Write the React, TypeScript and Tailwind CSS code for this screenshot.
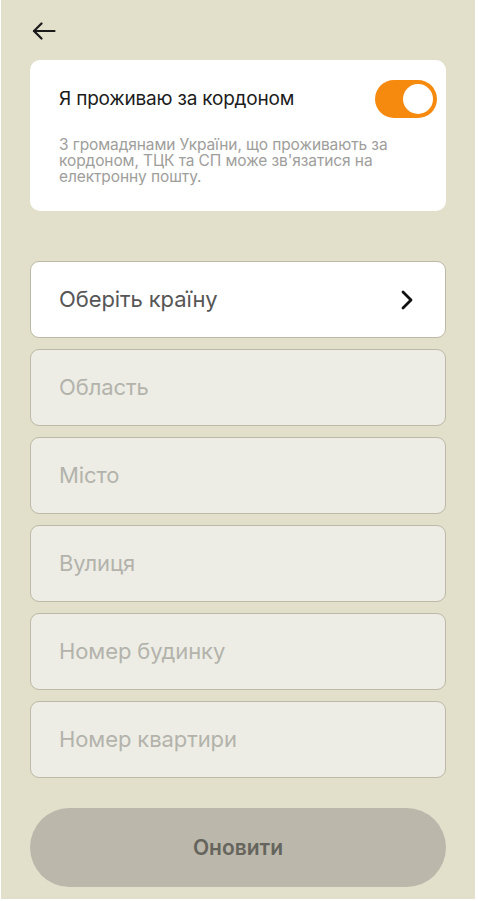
import React from "react";

const fields = ["Область", "Місто", "Вулиця", "Номер будинку", "Номер квартири"];

export default function App() {
  return (
    <div className="w-[478px] h-[901px] bg-white pl-[1px] pr-[3px] pb-[2px]" style={{ fontFamily: "Inter, 'Noto Sans', sans-serif" }}>
      <div className="h-full bg-[#e2dfcb] px-[29px] flex flex-col">
        <div className="h-[60px] flex items-center pl-[2px] pt-[2px]">
          <svg width="24" height="18" viewBox="0 0 24 18" fill="none" stroke="#1a1a1a" strokeWidth="2.2" strokeLinecap="round" strokeLinejoin="round">
            <path d="M22.5 9H2" />
            <path d="M9.5 1.5L2 9l7.5 7.5" />
          </svg>
        </div>
        <div className="bg-white rounded-[10px] h-[151px] pl-[29px] pr-[9px] pt-[20px]">
          <div className="flex items-center justify-between">
            <span className="text-[19px] leading-[24px] text-[#1c1c1c] tracking-[-0.2px]">Я проживаю за кордоном</span>
            <div className="w-[62px] h-[38px] rounded-full bg-[#f68a0f] flex items-center justify-end pr-[4px]">
              <div className="w-[30px] h-[30px] rounded-full bg-white" />
            </div>
          </div>
          <p className="mt-[19px] text-[15.5px] leading-[16px] text-[#9e9e9b] tracking-[-0.1px] pr-[20px]">
            З громадянами України, що проживають за кордоном, ТЦК та СП може зв'язатися на електронну пошту.
          </p>
        </div>
        <div className="mt-[50px] flex flex-col gap-[11px]">
          <div className="h-[77px] rounded-[9px] bg-white border border-[#bdb9a6] flex items-center justify-between pl-[28px] pr-[32px]">
            <span className="text-[22px] text-[#565656] tracking-[-0.1px]">Оберіть країну</span>
            <svg width="12" height="20" viewBox="0 0 12 20" fill="none" stroke="#111" strokeWidth="2.8" strokeLinecap="round" strokeLinejoin="round">
              <path d="M2 2l8 8-8 8" />
            </svg>
          </div>
          {fields.map((f) => (
            <div key={f} className="h-[77px] rounded-[9px] bg-[#edede5] border border-[#bdb9a6] flex items-center pl-[28px]">
              <span className="text-[22px] text-[#b3b3ac] tracking-[-0.1px]">{f}</span>
            </div>
          ))}
        </div>
        <div className="mt-[30px] h-[79px] rounded-full bg-[#bbb8ab] flex items-center justify-center">
          <span className="text-[21px] font-semibold text-[#66655d]">Оновити</span>
        </div>
      </div>
    </div>
  );
}
